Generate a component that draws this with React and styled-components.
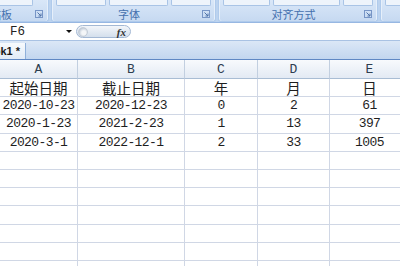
import React from 'react'
import styled, { createGlobalStyle } from 'styled-components'

const GlobalStyle = createGlobalStyle`
  html, body {
    margin: 0;
    padding: 0;
    background: #ffffff;
    overflow: hidden;
  }
  body {
    width: 400px;
    height: 266px;
  }
`

const columns = ['A', 'B', 'C', 'D', 'E']
const widths = [78, 107, 73, 72, 80]

const rows = [
  ['起始日期', '截止日期', '年', '月', '日'],
  ['2020-10-23', '2020-12-23', '0', '2', '61'],
  ['2020-1-23', '2021-2-23', '1', '13', '397'],
  ['2020-3-1', '2022-12-1', '2', '33', '1005'],
]

const groups = [
  { label: '剪贴板', width: 96, offset: -49, buttons: [30, 40] },
  { label: '字体', width: 163, offset: 0, buttons: [50, 60, 40] },
  { label: '对齐方式', width: 158, offset: 0, buttons: [48, 68, 30] },
  { label: '数字', width: 90, offset: 0, buttons: [40] },
]

const Launcher = () => (
  <svg width="8" height="8" viewBox="0 0 8 8">
    <rect x="0.5" y="0.5" width="7" height="7" fill="none" stroke="#7795c6" />
    <path d="M2.5 2.5 L6 6 M6 3.5 L6 6 L3.5 6" stroke="#4f72a8" strokeWidth="1" fill="none" />
  </svg>
)

const Excel = () => {
  const empty = Array.from({ length: 7 }, () => ['', '', '', '', ''])
  return (
    <Page>
      <Ribbon>
        {groups.map((g, i) => (
          <Group key={i} $width={g.width} $offset={g.offset}>
            <ButtonStrip>
              {g.buttons.map((w, j) => (
                <ButtonEdge key={j} $width={w} />
              ))}
            </ButtonStrip>
            <LabelRow>
              <GroupLabel>{g.label}</GroupLabel>
              <Launcher />
            </LabelRow>
          </Group>
        ))}
      </Ribbon>

      <FormulaBar>
        <NameBox>
          <span>F6</span>
          <DropArrow />
        </NameBox>
        <Pill>
          <CancelDot />
          <Fx>fx</Fx>
        </Pill>
        <FormulaInput />
      </FormulaBar>

      <TabStrip>
        <SheetTab>Book1 *</SheetTab>
      </TabStrip>

      <Grid>
        {columns.map((c) => (
          <HeaderCell key={c}>{c}</HeaderCell>
        ))}
        {rows.concat(empty).map((r, ri) =>
          r.map((v, ci) => (
            <Cell key={ri + '-' + ci} $cjk={ri === 0}>{v}</Cell>
          ))
        )}
      </Grid>
    </Page>
  )
}

export default function App() {
  return (
    <>
      <GlobalStyle />
      <Excel />
    </>
  )
}

const Page = styled.div`
  width: 400px;
  height: 266px;
  overflow: hidden;
  display: flex;
  flex-direction: column;
  & > * {
    flex: none;
  }
`

const Ribbon = styled.div`
  display: flex;
  gap: 2px;
  height: 23px;
  box-sizing: border-box;
  background: #bcd3ef;
  border-bottom: 1px solid #97b7e2;
  overflow: hidden;
`

const Group = styled.div`
  flex: none;
  width: ${(p) => p.$width}px;
  margin-left: ${(p) => p.$offset}px;
  display: flex;
  flex-direction: column;
  background: linear-gradient(#d9e7f8, #c6d9f1);
  border: 1px solid #b0cbec;
  border-top: none;
  border-radius: 0 0 3px 3px;
  box-shadow: inset 1px 0 0 #e6effa, inset -1px 0 0 #e6effa;
`

const ButtonStrip = styled.div`
  display: flex;
  gap: 3px;
  height: 6px;
  flex: none;
  padding: 0 4px;
`

const ButtonEdge = styled.div`
  width: ${(p) => p.$width}px;
  height: 5px;
  background: #eef4fb;
  border: 1px solid #a9c4e6;
  border-top: none;
  border-radius: 0 0 2px 2px;
`

const LabelRow = styled.div`
  flex: 1;
  display: flex;
  align-items: center;
  padding: 0 5px 0 4px;
`

const GroupLabel = styled.div`
  flex: 1;
  text-align: center;
  font-family: "Noto Sans CJK SC", sans-serif;
  font-size: 11px;
  line-height: 14px;
  color: #4470ae;
`

const FormulaBar = styled.div`
  display: flex;
  align-items: center;
  height: 18px;
  box-sizing: border-box;
  background: #ffffff;
  border-bottom: 1px solid #a9c2e3;
`

const NameBox = styled.div`
  flex: none;
  width: 76px;
  box-sizing: border-box;
  display: flex;
  align-items: center;
  justify-content: space-between;
  padding: 0 4px 0 10px;
  font-family: "Liberation Mono", monospace;
  font-size: 12.5px;
  color: #222;
`

const DropArrow = styled.div`
  width: 0;
  height: 0;
  border-left: 3px solid transparent;
  border-right: 3px solid transparent;
  border-top: 3px solid #111;
`

const Pill = styled.div`
  flex: none;
  width: 55px;
  height: 13px;
  box-sizing: border-box;
  display: flex;
  align-items: center;
  justify-content: space-between;
  padding: 0 4px 0 1px;
  border: 1px solid #a3b8d4;
  border-radius: 7px;
  background: linear-gradient(#f3f6fa, #d4dfec);
`

const CancelDot = styled.div`
  width: 10px;
  height: 10px;
  border-radius: 50%;
  background: radial-gradient(circle at 60% 60%, #f4f6f8 30%, #b9c4d2 80%);
  border: 1px solid #c4cdd8;
  box-sizing: border-box;
`

const Fx = styled.span`
  font-family: "Liberation Serif", serif;
  font-style: italic;
  font-weight: bold;
  font-size: 11px;
  color: #333;
`

const FormulaInput = styled.div`
  flex: 1;
  height: 17px;
  background: #fff;
`

const TabStrip = styled.div`
  display: flex;
  height: 19px;
  box-sizing: border-box;
  background: linear-gradient(#dbe7f6, #c2d6ef);
  border-bottom: 1px solid #5f88c4;
  overflow: hidden;
`

const SheetTab = styled.div`
  flex: none;
  margin-left: -27px;
  margin-top: 2px;
  padding: 0 6px;
  width: 53px;
  box-sizing: border-box;
  white-space: nowrap;
  display: flex;
  align-items: center;
  background: linear-gradient(#f7fafd, #e1ebf7);
  border-right: 1px solid #8fb0da;
  font-family: "Liberation Sans", sans-serif;
  font-weight: bold;
  font-size: 11px;
  color: #1b1b1b;
`

const Grid = styled.div`
  display: grid;
  grid-template-columns: ${widths.map((w) => w + 'px').join(' ')};
  grid-template-rows: 19px;
  grid-auto-rows: 18.2px;
  width: max-content;
`

const HeaderCell = styled.div`
  box-sizing: border-box;
  display: flex;
  align-items: center;
  justify-content: center;
  background: linear-gradient(#f8fafd, #e3eaf4);
  border-right: 1px solid #c2cfe0;
  border-bottom: 1px solid #a9bdd4;
  font-family: "Liberation Mono", monospace;
  font-size: 13px;
  color: #2d3d50;
`

const Cell = styled.div`
  box-sizing: border-box;
  display: flex;
  align-items: center;
  justify-content: center;
  white-space: nowrap;
  border-right: 1px solid #d0d7e5;
  border-bottom: 1px solid #d0d7e5;
  font-family: ${(p) => (p.$cjk ? '"Noto Sans CJK SC", sans-serif' : '"Liberation Mono", monospace')};
  font-size: ${(p) => (p.$cjk ? '14.5px' : '13px')};
  letter-spacing: ${(p) => (p.$cjk ? '0' : '-0.6px')};
  color: #1e1e1e;
`
